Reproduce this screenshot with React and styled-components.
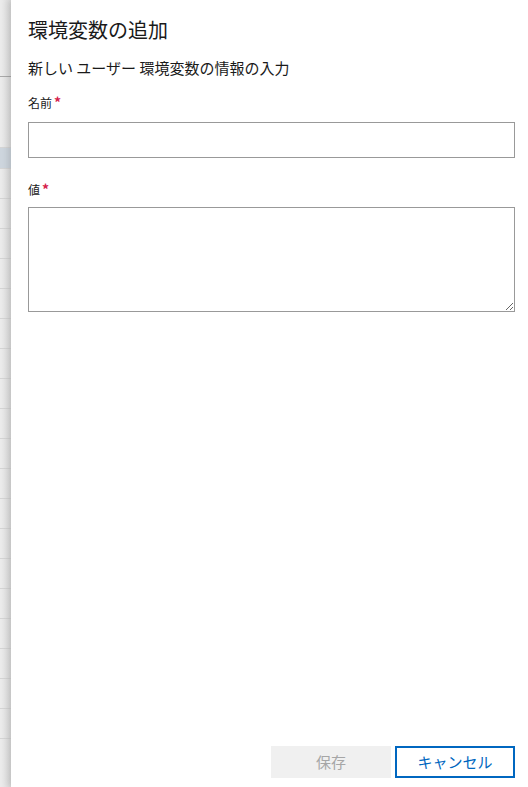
import React from "react"
import styled, { createGlobalStyle } from "styled-components"

const Global = createGlobalStyle`
  html, body {
    margin: 0;
    padding: 0;
    height: 100%;
    background: #e4e4e4;
  }
  #root {
    height: 100%;
  }
  * {
    box-sizing: border-box;
  }
`

const font = `"Noto Sans CJK JP", "Noto Sans", sans-serif`

const Page = styled.div`
  display: flex;
  height: 787px;
  font-family: ${font};
  color: #1a1a1a;
  overflow: hidden;
`

const Backdrop = styled.div`
  width: 11px;
  flex-shrink: 0;
  display: flex;
  flex-direction: column;
  background: linear-gradient(to right, #ececec, #dcdcdc);
`

const BackRow = styled.div`
  height: ${p => p.h}px;
  flex-shrink: 0;
  border-bottom: 1px solid ${p => (p.dark ? "#a9a9a9" : "#d4d4d4")};
  background: ${p => (p.hl ? "#cdd5dd" : "transparent")};
`

const Panel = styled.div`
  flex: 1;
  display: flex;
  flex-direction: column;
  background: #ffffff;
  padding: 16px 13px 9px 17px;
  box-shadow: -3px 0 6px rgba(0, 0, 0, 0.12);
  position: relative;
`

const Title = styled.h1`
  margin: 0;
  font-size: 20px;
  line-height: 28px;
  font-weight: 400;
`

const Subtitle = styled.p`
  margin: 14px 0 0;
  font-size: 15px;
  line-height: 20px;
`

const Field = styled.div`
  display: flex;
  flex-direction: column;
  margin-top: ${p => p.top}px;
`

const Label = styled.label`
  font-size: 12px;
  line-height: 17px;
  margin-bottom: ${p => p.gap}px;
`

const Star = styled.span`
  color: #d6204b;
  margin-left: 2px;
  font-size: 14px;
  font-weight: 700;
  line-height: 12px;
`

const TextInput = styled.input`
  height: 36px;
  border: 1px solid #999999;
  border-radius: 0;
  padding: 0 8px;
  font: 14px ${font};
  outline: none;
`

const TextArea = styled.textarea`
  height: 105px;
  border: 1px solid #999999;
  border-radius: 0;
  padding: 6px 8px;
  font: 14px ${font};
  outline: none;
  resize: vertical;
`

const Footer = styled.div`
  margin-top: auto;
  display: flex;
  justify-content: flex-end;
  gap: 4px;
`

const Button = styled.button`
  width: 120px;
  height: 32px;
  font: 15px/20px ${font};
  border-radius: 0;
  padding: 0;
  background: ${p => (p.primary ? "#f0f0f0" : "#ffffff")};
  color: ${p => (p.primary ? "#a6a6a6" : "#0067c0")};
  border: ${p => (p.primary ? "none" : "2px solid #0067c0")};
`

const rows = [
  [77, true],
  [71],
  [21, false, true],
  [30],
  [30],
  [30],
  [30],
  [30],
  [30],
  [30],
  [30],
  [30],
  [30],
  [30],
  [30],
  [30],
  [30],
  [30],
  [30],
  [30],
  [30],
  [30]
]

export default function App() {
  return (
    <>
      <Global />
      <Page>
        <Backdrop>
          {rows.map(([h, dark, hl], i) => (
            <BackRow key={i} h={h} dark={dark} hl={hl} />
          ))}
        </Backdrop>
        <Panel>
          <Title>環境変数の追加</Title>
          <Subtitle>新しい ユーザー 環境変数の情報の入力</Subtitle>
          <Field top={16}>
            <Label gap={11}>
              名前<Star>*</Star>
            </Label>
            <TextInput />
          </Field>
          <Field top={23}>
            <Label gap={9}>
              値<Star>*</Star>
            </Label>
            <TextArea />
          </Field>
          <Footer>
            <Button primary disabled>保存</Button>
            <Button>キャンセル</Button>
          </Footer>
        </Panel>
      </Page>
    </>
  )
}
